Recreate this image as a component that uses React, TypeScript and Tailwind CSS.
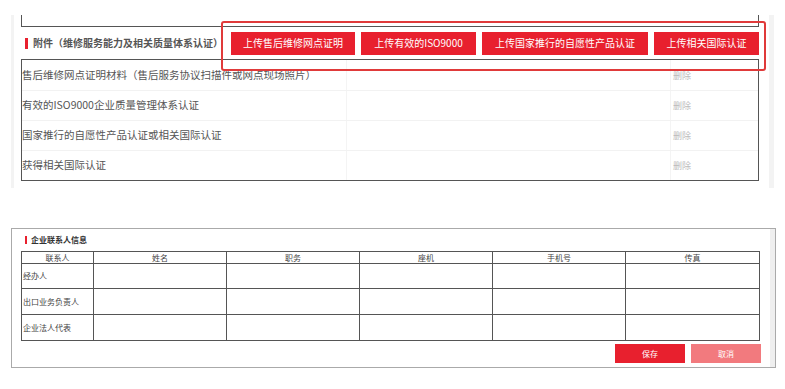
import React from 'react';

const cjk = "font-['Microsoft_YaHei','Noto_Sans_CJK_SC',sans-serif]";

const attachRows = [
  '售后维修网点证明材料（售后服务协议扫描件或网点现场照片）',
  '有效的ISO9000企业质量管理体系认证',
  '国家推行的自愿性产品认证或相关国际认证',
  '获得相关国际认证',
];

const uploadButtons = [
  { label: '上传售后维修网点证明', w: 'w-[124px]' },
  { label: '上传有效的ISO9000', w: 'w-[115px]' },
  { label: '上传国家推行的自愿性产品认证', w: 'w-[166px]' },
  { label: '上传相关国际认证', w: 'w-[105px]' },
];

const contactCols = ['联系人', '姓名', '职务', '座机', '手机号', '传真'];
const contactRows = [
  { label: '经办人', h: 'h-[25px]' },
  { label: '出口业务负责人', h: 'h-[26px]' },
  { label: '企业法人代表', h: 'h-[26px]' },
];

function AttachmentPanel() {
  return (
    <div className="relative ml-[11px] mt-[15px] h-[173px] w-[763px] border-l-[3px] border-r-[5px] border-[#f3f3f3]">
      {/* tail of the previous form box */}
      <div className="ml-[7px] h-[12px] w-[738px] border-x border-b border-[#555]" />

      <div className="ml-[7px] flex h-[32px] w-[738px] items-center">
        <span className="ml-[4px] h-[11px] w-[3px] bg-[#e8202e]" />
        <span className="ml-[5px] text-[10px] font-bold leading-none text-[#555]">
          附件（维修服务能力及相关质量体系认证）
        </span>
        <div className="ml-auto flex gap-[6px]">
          {uploadButtons.map((b) => (
            <button
              key={b.label}
              className={`${b.w} h-[23px] bg-[#e8202e] text-[10px] leading-none text-white`}
            >
              {b.label}
            </button>
          ))}
        </div>
      </div>

      <div className="ml-[7px] w-[738px] border border-[#555]">
        {attachRows.map((r, i) => (
          <div
            key={r}
            className={`flex h-[30px] items-center ${i > 0 ? 'border-t border-[#f2f2f2]' : ''}`}
          >
            <div className="flex h-full w-[325px] items-center border-r border-[#f4f4f4] text-[10.5px] leading-none text-[#555]">
              {r}
            </div>
            <div className="h-full w-[324px] border-r border-[#f4f4f4]" />
            <div className="pl-[2px] text-[9px] leading-none text-[#bbb]">删除</div>
          </div>
        ))}
      </div>

      {/* annotation frame around the upload buttons */}
      <div className="absolute left-[207px] top-[6px] h-[50px] w-[545px] rounded-[3px] border-2 border-[#e03a3a]" />
    </div>
  );
}

function ContactPanel() {
  return (
    <div className="ml-[11px] mt-[40px] h-[140px] w-[765px] border border-[#aaa] shadow-[inset_-5px_0_0_#efefef]">
      <div className="flex h-[22px] items-center pl-[13px]">
        <span className="h-[8px] w-[2px] bg-[#e8202e]" />
        <span className="ml-[4px] text-[8px] font-bold leading-none text-[#333]">企业联系人信息</span>
      </div>
      <table className="ml-[9px] w-[738px] table-fixed border-collapse">
        <colgroup>
          <col className="w-[72px]" />
          <col className="w-[133px]" />
          <col className="w-[133px]" />
          <col className="w-[133px]" />
          <col className="w-[133px]" />
          <col className="w-[134px]" />
        </colgroup>
        <thead>
          <tr className="h-[12px]">
            {contactCols.map((c) => (
              <th
                key={c}
                className="border border-[#555] p-0 text-center text-[8px] font-normal leading-none text-[#444]"
              >
                {c}
              </th>
            ))}
          </tr>
        </thead>
        <tbody>
          {contactRows.map((r) => (
            <tr key={r.label} className={r.h}>
              <td className="border border-[#555] p-0 pl-[1px] text-[8px] leading-none text-[#444]">
                {r.label}
              </td>
              {[0, 1, 2, 3, 4].map((k) => (
                <td key={k} className="border border-[#555] p-0" />
              ))}
            </tr>
          ))}
        </tbody>
      </table>
      <div className="mt-[3px] flex justify-end gap-[6px] pr-[14px]">
        <button className="h-[19px] w-[70px] bg-[#e8202e] text-[8px] leading-none text-white">保存</button>
        <button className="h-[19px] w-[70px] bg-[#f27a7e] text-[8px] leading-none text-white">取消</button>
      </div>
    </div>
  );
}

export default function App() {
  return (
    <div className={`h-[389px] w-[785px] overflow-hidden bg-white ${cjk}`}>
      <AttachmentPanel />
      <ContactPanel />
    </div>
  );
}
